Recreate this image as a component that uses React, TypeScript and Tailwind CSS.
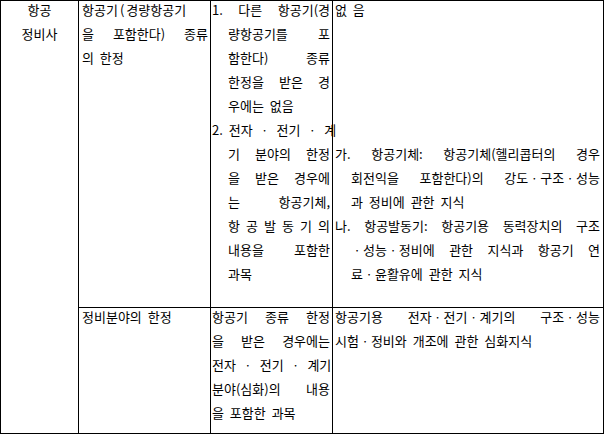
const font = { fontFamily: '"Noto Sans CJK KR", "Noto Sans", sans-serif' }

function J({ children, indent = false }: { children: React.ReactNode; indent?: boolean }) {
  return (
    <div className={`text-justify [text-align-last:justify] whitespace-nowrap ${indent ? "pl-[16px]" : ""}`}>
      {children}
    </div>
  )
}

function L({ children, indent = false }: { children?: React.ReactNode; indent?: boolean }) {
  return <div className={`whitespace-nowrap h-[24px] ${indent ? "pl-[16px]" : ""}`}>{children}</div>
}

export default function App() {
  return (
    <div className="bg-white w-[605px] h-[436px] text-black" style={font}>
      <div className="w-[604px] border border-black grid grid-cols-[78px_132px_122px_270px] grid-rows-[307px_125px] text-[13px] leading-[24px] [word-spacing:3px]">
        <div className="row-span-2 border-r border-black text-center">
          <div className="-mt-[3px]">
            <div>항공</div>
            <div>정비사</div>
          </div>
        </div>

        <div className="border-r border-b border-black pl-[3px] pr-[2px]">
          <div className="-mt-[3px]">
            <L>
              항공기<span className="px-[2px]">(</span>경량항공기
            </L>
            <J>을 포함한다) 종류</J>
            <L>의 한정</L>
          </div>
        </div>

        <div className="border-r border-b border-black pl-[1px] pr-[2px]">
          <div className="-mt-[3px]">
            <J>1. 다른 항공기(경</J>
            <J indent>량항공기를 포</J>
            <J indent>함한다) 종류</J>
            <J indent>한정을 받은 경</J>
            <L indent>우에는 없음</L>
            <J>2. 전자 ㆍ 전기 ㆍ 계</J>
            <J indent>기 분야의 한정</J>
            <J indent>을 받은 경우에</J>
            <J indent>는 항공기체,</J>
            <div className="pl-[16px] flex justify-between">
              <span>항</span>
              <span>공</span>
              <span>발</span>
              <span>동</span>
              <span>기</span>
              <span>의</span>
            </div>
            <J indent>내용을 포함한</J>
            <L indent>과목</L>
          </div>
        </div>

        <div className="border-b border-black pl-[2px] pr-[3px]">
          <div className="-mt-[3px]">
            <L>없 음</L>
            <div className="h-[120px]" />
            <J>가. 항공기체: 항공기체(헬리콥터의 경우</J>
            <J indent>회전익을 포함한다)의 강도ㆍ구조ㆍ성능</J>
            <L indent>과 정비에 관한 지식</L>
            <J>나. 항공발동기: 항공기용 동력장치의 구조</J>
            <J indent>ㆍ성능ㆍ정비에 관한 지식과 항공기 연</J>
            <L indent>료ㆍ윤활유에 관한 지식</L>
          </div>
        </div>

        <div className="border-r border-black pl-[3px] pr-[2px]">
          <div className="-mt-[3px]">
            <L>정비분야의 한정</L>
          </div>
        </div>

        <div className="border-r border-black pl-[1px] pr-[2px]">
          <div className="-mt-[3px]">
            <J>항공기 종류 한정</J>
            <J>을 받은 경우에는</J>
            <J>전자 ㆍ 전기 ㆍ 계기</J>
            <J>분야(심화)의 내용</J>
            <L>을 포함한 과목</L>
          </div>
        </div>

        <div className="pl-[2px] pr-[3px]">
          <div className="-mt-[3px]">
            <J>항공기용 전자ㆍ전기ㆍ계기의 구조ㆍ성능</J>
            <L>시험ㆍ정비와 개조에 관한 심화지식</L>
          </div>
        </div>
      </div>
    </div>
  )
}
